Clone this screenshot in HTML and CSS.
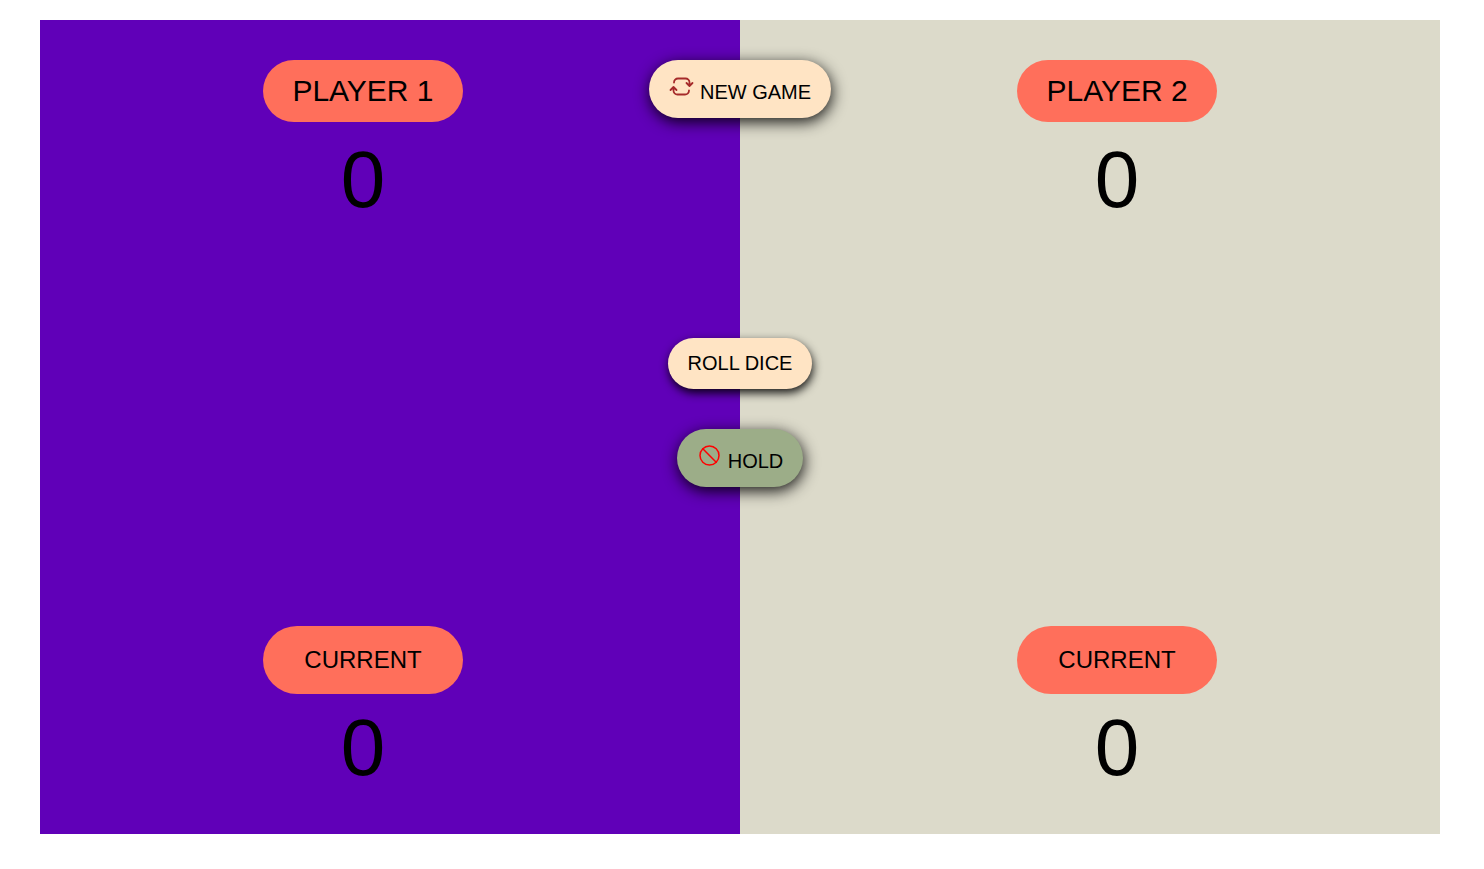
FILE: index.html
```html
<!DOCTYPE html>
<html lang="en">
<head>
<meta charset="utf-8">
<meta name="viewport" content="width=device-width, initial-scale=1">
<title>Dice Game</title>
<link rel="stylesheet" href="styles.css">
</head>
<body>
<main class="board">
  <section class="player">
    <div>
      <h1 class="name">PLAYER 1</h1>
      <p class="score">0</p>
    </div>
    <div>
      <h2 class="current">CURRENT</h2>
      <p class="score score-current">0</p>
    </div>
  </section>
  <div class="actions">
    <button type="button" class="btn">
      <svg class="icon icon-repeat" viewBox="0 0 25 25" aria-hidden="true">
        <path d="M5 8.500a4 4 0 0 1 4-4h7.500A4 4 0 0 1 20.500 8.500v3.300M17.500 9l3 3 3-3M20 16.500a4 4 0 0 1-4 4H8.500A4 4 0 0 1 4.500 16.500V13.200M1.500 16l3-3 3 3"/>
      </svg>
      NEW GAME
    </button>
    <div class="turn">
      <button type="button" class="btn btn-roll">ROLL DICE</button>
      <button type="button" class="btn btn-hold">
        <svg class="icon icon-stop" viewBox="0 0 25 25" aria-hidden="true">
          <circle cx="12.500" cy="12.500" r="9.500"/>
          <path d="M5.800 5.800l13.400 13.400"/>
        </svg>
        HOLD
      </button>
    </div>
  </div>
  <section class="player">
    <div>
      <h1 class="name">PLAYER 2</h1>
      <p class="score">0</p>
    </div>
    <div>
      <h2 class="current">CURRENT</h2>
      <p class="score score-current">0</p>
    </div>
  </section>
</main>
</body>
</html>
```
FILE: styles.css
```css
* {
  box-sizing: border-box;
  margin: 0;
  padding: 0;
}

body {
  display: flex;
  min-height: 100vh;
  padding: 20px 44px 35px 40px;
  background: #fff;
  color: #000;
  font-family: "Liberation Sans", Arial, sans-serif;
}

.board {
  flex: 1;
  display: grid;
  grid-template-columns: 1fr auto 1fr;
  padding: 40px 37px;
  background: linear-gradient(to right, #6000b8 50%, #dcdaca 50%);
}

.player {
  display: flex;
  flex-direction: column;
  align-items: center;
  justify-content: space-between;
  text-align: center;
}

.name,
.current {
  width: 200px;
  background: #ff6f5b;
  font-weight: 400;
}

.name {
  padding: 14px 0;
  border-radius: 31px;
  font-size: 30px;
  line-height: 34px;
}

.current {
  padding: 20px 0;
  border-radius: 34px;
  font-size: 24px;
  line-height: 28px;
}

.score {
  margin-top: 12px;
  font-size: 80px;
  line-height: 92px;
}

.score-current {
  margin-top: 8px;
}

.actions,
.turn {
  display: flex;
  flex-direction: column;
  align-items: center;
}

.actions {
  gap: 220px;
}

.turn {
  gap: 40px;
}

.btn {
  display: flex;
  align-items: flex-end;
  gap: 6px;
  padding: 14px 20px;
  border: 0;
  border-radius: 30px;
  background: #ffe4c4;
  box-shadow: 1px 4px 15px rgba(0, 0, 0, 0.9);
  color: #000;
  font-family: inherit;
  font-size: 20px;
  line-height: 23px;
  cursor: pointer;
}

.btn-roll {
  box-shadow: 1px 4px 10px rgba(0, 0, 0, 0.9);
}

.btn-hold {
  background: #9cad88;
}

.icon {
  width: 25px;
  height: 25px;
  margin-bottom: 5px;
  fill: none;
  stroke-linecap: round;
  stroke-linejoin: round;
  stroke-width: 1.5;
}

.icon-repeat {
  stroke: #a52a2a;
  stroke-width: 1.8;
}

.icon-stop {
  stroke: #f00;
}
```
